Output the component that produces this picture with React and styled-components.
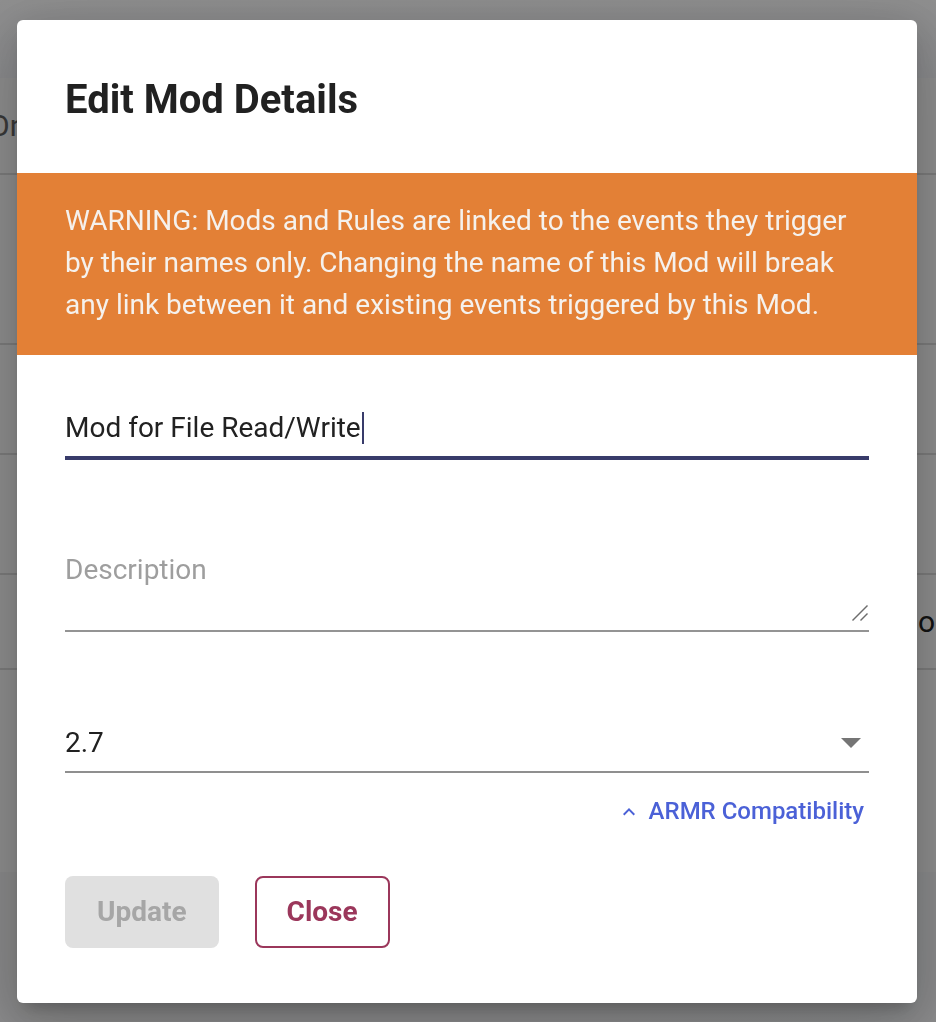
import React from "react";
import styled, { createGlobalStyle } from "styled-components";

const GlobalStyle = createGlobalStyle`
  html, body {
    margin: 0;
    padding: 0;
    height: 100%;
    overflow: hidden;
  }
  body {
    font-family: Roboto, "Noto Sans", "Liberation Sans", sans-serif;
    background: #ffffff;
  }
  * { box-sizing: border-box; }
`;

/* ---------- background page (under the modal) ---------- */
const Page = styled.div`
  display: flex;
  flex-direction: column;
  height: 100vh;
  background: #ffffff;
`;

const PageHeader = styled.header`
  height: 78px;
  flex: none;
  background: linear-gradient(#ffffff, #f9fafe);
`;

const PageRow = styled.div`
  height: ${(p) => p.$h}px;
  flex: none;
  display: grid;
  grid-template-columns: ${(p) => p.$cols || "1fr"};
  align-items: center;
  border-bottom: ${(p) => (p.$noBorder ? "none" : "2px solid #dedede")};
  overflow: hidden;
`;

const RowText = styled.span`
  font-size: 30px;
  white-space: nowrap;
  color: ${(p) => p.$color || "#222"};
  text-indent: ${(p) => p.$indent || 0}px;
`;

const PageFooter = styled.footer`
  flex: 1;
  background: linear-gradient(90deg, #f8f8f9, #f9fafc);
`;

/* ---------- modal ---------- */
const Backdrop = styled.div`
  position: fixed;
  inset: 0;
  padding-right: 2px;
  background: rgba(0, 0, 0, 0.44);
  display: flex;
  align-items: center;
  justify-content: center;
`;

const Dialog = styled.div`
  width: 900px;
  background: #ffffff;
  border-radius: 6px;
  box-shadow: 0 22px 70px 8px rgba(0, 0, 0, 0.14),
    0 9px 46px 8px rgba(0, 0, 0, 0.12), 0 11px 15px -7px rgba(0, 0, 0, 0.2);
  display: flex;
  flex-direction: column;
  overflow: hidden;
`;

const Title = styled.h2`
  margin: 0;
  padding: 48px 48px 0;
  font-size: 40px;
  line-height: 64px;
  font-weight: 700;
  color: #212121;
`;

const Warning = styled.div`
  margin-top: 41px;
  background: #e38036;
  color: #f5f1ed;
  font-size: 28px;
  line-height: 42px;
  padding: 27px 48px 29px;
`;

const Form = styled.div`
  display: flex;
  flex-direction: column;
  padding: 45px 48px 55px;
`;

const NameField = styled.div`
  display: flex;
  align-items: center;
  padding: 8px 0;
  border-bottom: 4px solid #383b6a;
  font-size: 28px;
  line-height: 40px;
  color: #212121;
`;

const Caret = styled.span`
  display: inline-block;
  width: 2px;
  height: 32px;
  margin-left: 1px;
  background: #383b6a;
`;

const DescField = styled.div`
  margin-top: 82px;
  display: grid;
  border-bottom: 2px solid #949494;
`;

const TextArea = styled.textarea`
  grid-area: 1 / 1;
  width: 100%;
  height: 88px;
  padding: 8px 0 0;
  margin: 0;
  border: none;
  outline: none;
  resize: none;
  background: transparent;
  font-family: inherit;
  font-size: 28px;
  line-height: 40px;
  color: #212121;
  &::placeholder {
    color: #9e9e9e;
    opacity: 1;
  }
`;

const ResizeHandle = styled.svg`
  grid-area: 1 / 1;
  align-self: end;
  justify-self: end;
  margin: 0 1px 9px 0;
  pointer-events: none;
`;

const SelectField = styled.div`
  margin-top: 83px;
  display: flex;
  align-items: center;
  padding: 8px 0;
  border-bottom: 2px solid #8f8f8f;
  font-size: 28px;
  line-height: 40px;
  color: #212121;
`;

const SelectValue = styled.span`
  flex: 1;
`;

const DropArrow = styled.svg`
  margin-right: 8px;
  flex: none;
`;

const CompatRow = styled.div`
  margin-top: 20px;
  display: flex;
  justify-content: flex-end;
  align-items: center;
  padding-right: 5px;
`;

const CompatLink = styled.button`
  display: flex;
  align-items: center;
  gap: 8px;
  padding: 0;
  border: none;
  background: none;
  font-family: inherit;
  font-size: 24px;
  line-height: 36px;
  font-weight: 500;
  color: #4b61d7;
  cursor: pointer;
  svg {
    margin-top: 3px;
  }
`;

const Actions = styled.div`
  margin-top: 47px;
  display: flex;
  gap: 36px;
`;

const Button = styled.button`
  height: 72px;
  border-radius: 8px;
  font-family: inherit;
  font-size: 28px;
  font-weight: 700;
  padding: 0 ${(p) => (p.$outlined ? 30 : 32)}px;
  background: ${(p) => (p.$outlined ? "#ffffff" : "#e0e0e0")};
  color: ${(p) => (p.$outlined ? "#9b375b" : "#a6a6a6")};
  border: ${(p) => (p.$outlined ? "2px solid #9b375b" : "none")};
  cursor: ${(p) => (p.disabled ? "default" : "pointer")};
`;

export default function App() {
  return (
    <>
      <GlobalStyle />
      <Page>
        <PageHeader />
        <PageRow $h={97}>
          <RowText $indent={-11} $color="#666">Online</RowText>
        </PageRow>
        <PageRow $h={170} />
        <PageRow $h={110} />
        <PageRow $h={120} />
        <PageRow $h={95} $cols="918px 1fr">
          <span />
          <RowText>o</RowText>
        </PageRow>
        <PageRow $h={202} $noBorder />
        <PageFooter />
      </Page>

      <Backdrop>
        <Dialog role="dialog" aria-labelledby="edit-mod-title">
          <Title id="edit-mod-title">Edit Mod Details</Title>
          <Warning>
            WARNING: Mods and Rules are linked to the events they trigger by
            their names only. Changing the name of this Mod will break any link
            between it and existing events triggered by this Mod.
          </Warning>
          <Form>
            <NameField>
              <span>Mod for File Read/Write</span>
              <Caret />
            </NameField>

            <DescField>
              <TextArea placeholder="Description" rows={2} />
              <ResizeHandle width="16" height="16" viewBox="0 0 16 16">
                <line x1="0.5" y1="15.5" x2="15.5" y2="0.5" stroke="#6d6d6d" strokeWidth="1.4" />
                <line x1="8.5" y1="15.5" x2="15.5" y2="8.5" stroke="#6d6d6d" strokeWidth="1.4" />
              </ResizeHandle>
            </DescField>

            <SelectField>
              <SelectValue>2.7</SelectValue>
              <DropArrow width="20" height="10" viewBox="0 0 20 10">
                <polygon points="0,0 20,0 10,10" fill="#757575" />
              </DropArrow>
            </SelectField>

            <CompatRow>
              <CompatLink type="button">
                <svg width="24" height="24" viewBox="0 0 24 24">
                  <path
                    d="M12 8l-6 6 1.41 1.41L12 10.83l4.59 4.58L18 14z"
                    fill="#4b61d7"
                  />
                </svg>
                ARMR Compatibility
              </CompatLink>
            </CompatRow>

            <Actions>
              <Button disabled>Update</Button>
              <Button $outlined>Close</Button>
            </Actions>
          </Form>
        </Dialog>
      </Backdrop>
    </>
  );
}
